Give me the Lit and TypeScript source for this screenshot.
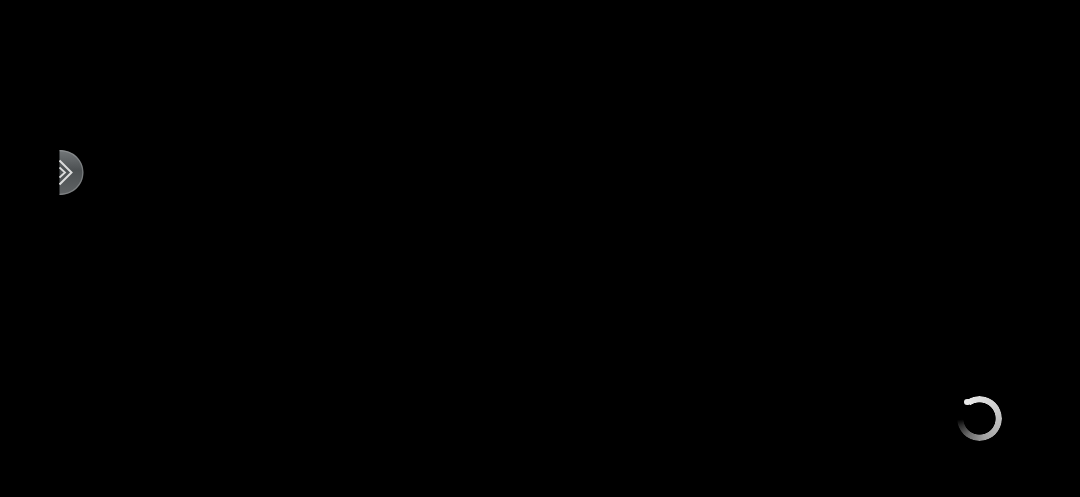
import { LitElement, html, css } from "lit";
import { customElement } from "lit/decorators.js";

@customElement("app-root")
export class AppRoot extends LitElement {
  static styles = css`
    :host {
      display: block;
      position: relative;
      width: 1080px;
      height: 497px;
      background: #000;
      overflow: hidden;
      font-family: "Liberation Sans", sans-serif;
    }
    .handle {
      position: absolute;
      left: 59px;
      top: 149.5px;
      width: 24.5px;
      height: 45px;
      display: block;
      filter: blur(0.45px);
    }
    .ring {
      position: absolute;
      left: 956.5px;
      top: 395.5px;
      width: 45.5px;
      height: 45.5px;
      border-radius: 50%;
      filter: blur(0.6px);
      background: conic-gradient(
        from 325deg,
        #e8e8e8 0deg,
        #d4d4d4 70deg,
        #bcbcbc 140deg,
        #a2a2a2 200deg,
        #6a6a6a 250deg,
        #2a2a2a 285deg,
        #000 302deg,
        #000 360deg
      );
      -webkit-mask: radial-gradient(circle closest-side, transparent 15.8px, #000 16.5px, #000 22.4px, transparent 23px);
      mask: radial-gradient(circle closest-side, transparent 15.8px, #000 16.5px, #000 22.4px, transparent 23px);
    }
    .cap {
      position: absolute;
      left: 964.4px;
      top: 398.6px;
      width: 6.6px;
      height: 6.6px;
      border-radius: 50%;
      background: #e8e8e8;
      filter: blur(0.5px);
    }
  `;

  render() {
    return html`
      <svg class="handle" viewBox="0 0 24.5 45" aria-hidden="true">
        <defs>
          <linearGradient id="fill" x1="0" y1="0" x2="0" y2="1">
            <stop offset="0" stop-color="#74787a"></stop>
            <stop offset="0.45" stop-color="#4c5052"></stop>
            <stop offset="1" stop-color="#606365"></stop>
          </linearGradient>
        </defs>
        <path d="M0.5 0 C14.5 0 24.5 10 24.5 22.5 C24.5 35 14.5 45 0.5 45 Z" fill="url(#fill)"></path>
        <path d="M0.5 0.7 C14 0.7 23.8 10.5 23.8 22.5 C23.8 34.5 14 44.3 0.5 44.3" fill="none" stroke="#a8aaac" stroke-width="1.2" opacity="0.45"></path>
        <path d="M0.5 17.5 L6 22.5 L0.5 27.5" fill="none" stroke="#dcdcdc" stroke-width="1.8"></path>
        <path d="M0.5 10.5 L12.5 22.5 L0.5 34.5" fill="none" stroke="#dcdcdc" stroke-width="2"></path>
      </svg>
      <div class="ring"></div>
      <div class="cap"></div>
    `;
  }
}
